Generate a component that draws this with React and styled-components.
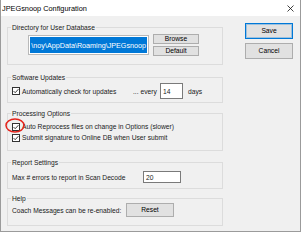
import React from 'react';
import styled, { createGlobalStyle } from 'styled-components';

const GlobalStyle = createGlobalStyle`
  body {
    margin: 0;
    background: #ffffff;
    font-family: "Liberation Sans", Arial, sans-serif;
    color: #1a1a1a;
  }
`;

const Window = styled.div`
  width: 301px;
  height: 232px;
  box-sizing: border-box;
  border: 1px solid #9b9b9b;
  border-top: none;
  background: #f0f0f0;
  display: flex;
  flex-direction: column;
`;

const TitleBar = styled.div`
  height: 16px;
  flex: none;
  background: #ffffff;
  display: flex;
  align-items: center;
  justify-content: space-between;
  padding: 0 6px 0 1px;
  font-size: 7.35px;
  color: #000;
`;

const Body = styled.div`
  flex: 1;
  display: flex;
  gap: 22px;
  padding: 7px 0 0 6px;
  font-size: 6.7px;
`;

const LeftCol = styled.div`
  width: 216px;
  display: flex;
  flex-direction: column;
`;

const RightCol = styled.div`
  width: 48px;
  display: flex;
  flex-direction: column;
  gap: 4px;
`;

const Group = styled.fieldset`
  margin: ${p => p.$top || 0}px 0 0;
  padding: 0 3px;
  border: 1px solid #dcdcdc;
  height: ${p => p.$h}px;
  box-sizing: border-box;
  min-inline-size: 0;
`;

const Legend = styled.legend`
  padding: 0 1px;
  font-size: 6.7px;
  line-height: 9px;
`;

const Button = styled.button`
  box-sizing: border-box;
  width: ${p => p.$w}px;
  height: ${p => p.$h}px;
  padding: 0;
  font-family: inherit;
  font-size: 6.7px;
  line-height: 1;
  color: #000;
  background: #e1e1e1;
  border: 1px solid ${p => (p.$default ? '#0078d7' : '#adadad')};
  box-shadow: ${p => (p.$default ? 'inset 0 0 0 1px rgba(0,120,215,0.3)' : 'none')};
`;

const DirRow = styled.div`
  display: flex;
  align-items: center;
  gap: 4px;
  margin-top: 2px;
  padding-left: 17px;
`;

const PathEdit = styled.div`
  box-sizing: border-box;
  width: 121px;
  height: 20px;
  padding: 1px;
  border: 1px solid #b9b9b9;
  background: #fff;
  overflow: hidden;
  display: flex;
  justify-content: flex-end;
`;

const Selected = styled.span`
  display: flex;
  align-items: center;
  padding: 0 1px;
  background: #0078d7;
  color: #fff;
  font-size: 7.2px;
  white-space: nowrap;
`;

const ButtonStack = styled.div`
  display: flex;
  flex-direction: column;
  gap: 2px;
`;

const GridRow = styled.div`
  display: grid;
  grid-template-columns: ${p => p.$cols};
  align-items: center;
  height: ${p => p.$h}px;
  margin-top: ${p => p.$top || 0}px;
  padding-left: 1px;
  white-space: nowrap;
`;

const CheckItem = styled.label`
  position: relative;
  display: flex;
  align-items: center;
  gap: 2px;
  height: ${p => p.$h || 11}px;
  white-space: nowrap;
`;

const CheckList = styled.div`
  display: flex;
  flex-direction: column;
  margin-top: 3px;
  padding-left: 1px;
`;

const NumEdit = styled.div`
  box-sizing: border-box;
  width: ${p => p.$w}px;
  height: ${p => p.$h}px;
  border: 1px solid #7a7a7a;
  background: #fff;
  padding-left: 2px;
  display: flex;
  align-items: center;
`;

const Days = styled.span`
  margin-left: 5px;
`;

const Annotation = styled.svg`
  position: absolute;
  left: -8px;
  top: -4px;
  overflow: visible;
  pointer-events: none;
`;

const CheckBox = () => (
  <svg width="8" height="8" viewBox="0 0 8 8">
    <rect x="0.5" y="0.5" width="7" height="7" fill="#fff" stroke="#333" />
    <path d="M1.6 4.1 L3.2 5.7 L6.4 2.2" fill="none" stroke="#222" strokeWidth="0.9" />
  </svg>
);

const CloseIcon = () => (
  <svg width="7" height="7" viewBox="0 0 7 7">
    <path d="M0.5 0.5 L6.5 6.5 M6.5 0.5 L0.5 6.5" stroke="#111" strokeWidth="0.8" />
  </svg>
);

export default function App() {
  return (
    <>
      <GlobalStyle />
      <Window>
        <TitleBar>
          <span>JPEGsnoop Configuration</span>
          <CloseIcon />
        </TitleBar>
        <Body>
          <LeftCol>
            <Group $h={42}>
              <Legend>Directory for User Database</Legend>
              <DirRow>
                <PathEdit>
                  <Selected>\noy\AppData\Roaming\JPEGsnoop</Selected>
                </PathEdit>
                <ButtonStack>
                  <Button $w={46} $h={10}>Browse</Button>
                  <Button $w={46} $h={10}>Default</Button>
                </ButtonStack>
              </DirRow>
            </Group>

            <Group $h={30} $top={8}>
              <Legend>Software Updates</Legend>
              <GridRow $cols="121px 27px 23px auto" $h={16} $top={1}>
                <CheckItem>
                  <CheckBox />
                  Automatically check for updates
                </CheckItem>
                <span>... every</span>
                <NumEdit $w={23} $h={16}>14</NumEdit>
                <Days>days</Days>
              </GridRow>
            </Group>

            <Group $h={42} $top={6}>
              <Legend>Processing Options</Legend>
              <CheckList>
                <CheckItem>
                  <CheckBox />
                  Auto Reprocess files on change in Options (slower)
                  <Annotation width="22" height="17" viewBox="0 0 22 17">
                    <ellipse cx="11" cy="8.5" rx="9" ry="6.4" fill="none" stroke="#e5231b" strokeWidth="1.5" />
                  </Annotation>
                </CheckItem>
                <CheckItem>
                  <CheckBox />
                  Submit signature to Online DB when User submit
                </CheckItem>
              </CheckList>
            </Group>

            <Group $h={31} $top={7}>
              <Legend>Report Settings</Legend>
              <GridRow $cols="131px 38px" $h={12} $top={4}>
                <span>Max # errors to report in Scan Decode</span>
                <NumEdit $w={38} $h={12}>20</NumEdit>
              </GridRow>
            </Group>

            <Group $h={32} $top={5}>
              <Legend>Help</Legend>
              <GridRow $cols="114px 48px" $h={14}>
                <span>Coach Messages can be re-enabled:</span>
                <Button $w={48} $h={14}>Reset</Button>
              </GridRow>
            </Group>
          </LeftCol>

          <RightCol>
            <Button $w={48} $h={16} $default>Save</Button>
            <Button $w={48} $h={16}>Cancel</Button>
          </RightCol>
        </Body>
      </Window>
    </>
  );
}
